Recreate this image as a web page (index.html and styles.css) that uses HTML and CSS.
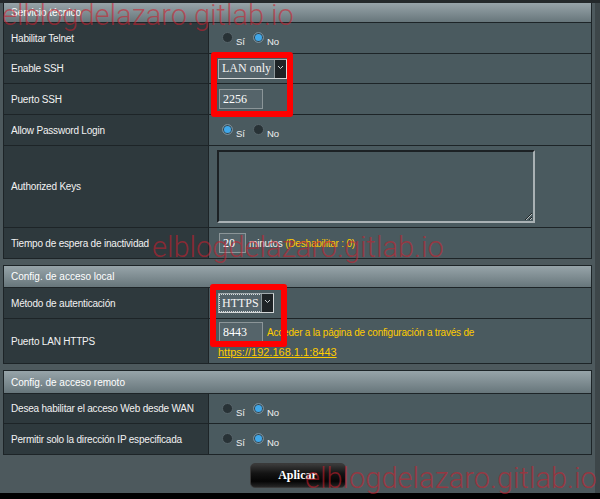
FILE: index.html
```html
<!DOCTYPE html>
<html lang="es">
<head>
<meta charset="utf-8">
<title>Administración - Sistema</title>
<link rel="stylesheet" href="styles.css">
</head>
<body>
<div class="topline"></div>
<div class="page">

  <section class="form-section first">
    <div class="section-head h20">Servicio técnico</div>
    <div class="row h31">
      <div class="label">Habilitar Telnet</div>
      <div class="field">
        <div class="radio-group">
          <label class="radio"><input type="radio" name="telnet"><span>Sí</span></label>
          <label class="radio"><input type="radio" name="telnet" checked><span>No</span></label>
        </div>
      </div>
    </div>
    <div class="row h30">
      <div class="label">Enable SSH</div>
      <div class="field">
        <div class="select">
          <span class="select-text">LAN only</span>
          <span class="select-arrow"><svg width="7" height="5" viewBox="0 0 7 5"><polyline points="1,1 3.5,3.5 6,1" fill="none" stroke="#c9cfd1" stroke-width="1"/></svg></span>
        </div>
      </div>
    </div>
    <div class="row h31">
      <div class="label">Puerto SSH</div>
      <div class="field">
        <input class="text-input w44" type="text" value="2256">
      </div>
    </div>
    <div class="row h31">
      <div class="label">Allow Password Login</div>
      <div class="field">
        <div class="radio-group">
          <label class="radio"><input type="radio" name="pwlogin" checked><span>Sí</span></label>
          <label class="radio"><input type="radio" name="pwlogin"><span>No</span></label>
        </div>
      </div>
    </div>
    <div class="row h82">
      <div class="label">Authorized Keys</div>
      <div class="field">
        <textarea class="keys"></textarea>
      </div>
    </div>
    <div class="row h30 last">
      <div class="label">Tiempo de espera de inactividad</div>
      <div class="field">
        <input class="text-input w27" type="text" value="20">
        <span class="unit">minutos <span class="hint">(Deshabilitar : 0)</span></span>
      </div>
    </div>
  </section>

  <section class="form-section">
    <div class="section-head h22">Config. de acceso local</div>
    <div class="row h31">
      <div class="label">Método de autenticación</div>
      <div class="field">
        <div class="select">
          <span class="select-text focused">HTTPS</span>
          <span class="select-arrow"><svg width="7" height="5" viewBox="0 0 7 5"><polyline points="1,1 3.5,3.5 6,1" fill="none" stroke="#c9cfd1" stroke-width="1"/></svg></span>
        </div>
      </div>
    </div>
    <div class="row h44 last">
      <div class="label">Puerto LAN HTTPS</div>
      <div class="field stack">
        <div class="line">
          <input class="text-input w44" type="text" value="8443">
          <span class="hint note">Acceder a la página de configuración a través de</span>
        </div>
        <a class="lan-link" href="#">https://192.168.1.1:8443</a>
      </div>
    </div>
  </section>

  <section class="form-section">
    <div class="section-head h23">Config. de acceso remoto</div>
    <div class="row h30">
      <div class="label">Desea habilitar el acceso Web desde WAN</div>
      <div class="field">
        <div class="radio-group">
          <label class="radio"><input type="radio" name="wan"><span>Sí</span></label>
          <label class="radio"><input type="radio" name="wan" checked><span>No</span></label>
        </div>
      </div>
    </div>
    <div class="row h30 last">
      <div class="label">Permitir solo la dirección IP especificada</div>
      <div class="field">
        <div class="radio-group">
          <label class="radio"><input type="radio" name="iponly"><span>Sí</span></label>
          <label class="radio"><input type="radio" name="iponly" checked><span>No</span></label>
        </div>
      </div>
    </div>
  </section>

  <div class="actions">
    <button class="btn-apply" type="button">Aplicar</button>
  </div>
</div>
<div class="footer"></div>

<!-- highlight frames drawn over the form -->
<div class="frame frame-ssh"></div>
<div class="frame frame-local"></div>

<!-- site stamp -->
<span class="stamp stamp-a">elblogdelazaro.gitlab.io</span>
<span class="stamp stamp-b">elblogdelazaro.gitlab.io</span>
<span class="stamp stamp-c">elblogdelazaro.gitlab.io</span>
</body>
</html>
```

FILE: styles.css
```css
* {
  box-sizing: border-box;
}

html,
body {
  margin: 0;
  padding: 0;
}

body {
  position: relative;
  height: 499px;
  overflow: hidden;
  background: #3d4649;
  font-family: "Liberation Sans", Arial, sans-serif;
  color: #ffffff;
}

.topline {
  height: 3px;
  background: #24292b;
}

.page {
  width: 595px;
  padding-left: 3px;
  background: #4d595d;
}

/* ---------- form sections ---------- */

.form-section {
  width: 589px;
  border: 1px solid #1d2427;
}

.form-section.first {
  border-top: 0;
}

.form-section + .form-section {
  margin-top: 6px;
}

.section-head {
  display: flex;
  align-items: center;
  padding-left: 7px;
  font-size: 10px;
  color: #ffffff;
  background: linear-gradient(#97a4a9, #7d8b90 55%, #67767b);
  border-bottom: 1px solid #1d2427;
}

.h20 { height: 20px; }
.h22 { height: 22px; }
.h23 { height: 23px; }
.h30 { height: 30px; }
.h31 { height: 31px; }
.h44 { height: 44px; }
.h82 { height: 82px; }

.row {
  display: grid;
  grid-template-columns: 205px 1fr;
  border-bottom: 1px solid #1d2427;
}

.row.last {
  border-bottom: 0;
}

.label {
  display: flex;
  align-items: center;
  padding-left: 7px;
  background: #2e393d;
  border-right: 1px solid #1d2427;
  font-size: 10px;
  letter-spacing: -0.2px;
  color: #f2f2f2;
}

.field {
  display: flex;
  align-items: center;
  padding-left: 9px;
  background: #4a5a5f;
}

.field.stack {
  display: block;
  padding-top: 3px;
}

/* ---------- radios ---------- */

.radio-group {
  display: flex;
  padding-left: 4px;
}

.radio {
  display: inline-flex;
  align-items: flex-end;
  margin-right: 8px;
}

.radio input {
  appearance: none;
  -webkit-appearance: none;
  width: 11px;
  height: 11px;
  margin: -1px 3px 0 0;
  border-radius: 50%;
  background: #283236;
  border: 1px solid #56646a;
}

.radio input:checked {
  background: #40a8ea;
  border-color: #7c888c;
  box-shadow: inset 0 0 0 1px #35434a;
}

.radio span {
  font-size: 9.5px;
  line-height: 10px;
  margin-bottom: -4px;
  color: #f0f0f0;
}

/* ---------- select ---------- */

.select {
  display: inline-flex;
  height: 20px;
  border: 1px solid #a3acaf;
  border-bottom-color: #d3d7d8;
  border-right-color: #d3d7d8;
  background: #54636a;
}

.select-text {
  display: flex;
  align-items: center;
  padding: 0 3px 0 3px;
  font-family: "Liberation Serif", "Times New Roman", serif;
  font-size: 12px;
  color: #f4f4f4;
}

.select-text.focused {
  margin: 1px 0 1px 1px;
  padding: 0 2px;
  outline: 1px dotted #d8dcdd;
}

.select-arrow {
  width: 12px;
  display: flex;
  justify-content: center;
  padding-top: 5px;
  background: #1e2326;
  border-left: 1px solid #8d979a;
}

.select-arrow svg {
  display: block;
}

/* ---------- text inputs ---------- */

.text-input {
  height: 20px;
  margin: 0 0 0 1px;
  padding: 0 0 0 3px;
  border: 1px solid #8b9598;
  background: #55646a;
  color: #ffffff;
  font-family: "Liberation Serif", "Times New Roman", serif;
  font-size: 12px;
  outline: none;
}

.w44 { width: 44px; }
.w27 { width: 27px; }

.keys {
  width: 318px;
  height: 73px;
  margin: 0 0 0 -1px;
  padding: 2px;
  background: #4a5a5f;
  border: 2px solid;
  border-color: #1c2124 #a9b1b4 #a9b1b4 #1c2124;
  color: #ffffff;
  outline: none;
}

.unit {
  margin-left: 3px;
  font-size: 10px;
  letter-spacing: -0.2px;
  color: #f2f2f2;
}

.hint {
  color: #ffcc00;
}

.line {
  display: flex;
  align-items: center;
  height: 20px;
}

.note {
  margin-left: 4px;
  font-size: 10px;
  letter-spacing: -0.2px;
}

.lan-link {
  display: block;
  width: max-content;
  margin-top: 4px;
  font-size: 11px;
  line-height: 12px;
  color: #ffcc00;
  text-decoration: underline;
}

/* ---------- apply button ---------- */

.actions {
  width: 589px;
  display: flex;
  justify-content: center;
  padding: 8px 0 5px;
}

.btn-apply {
  width: 96px;
  height: 25px;
  padding: 0;
  border: 1px solid #3a3a3a;
  border-radius: 5px;
  background: linear-gradient(#3b3b3b, #141414 40%, #050505 75%, #262626);
  color: #ffffff;
  font-family: "Liberation Serif", "Times New Roman", serif;
  font-size: 12px;
  font-weight: bold;
}

.footer {
  height: 12px;
  background: #000000;
}

/* ---------- overlays ---------- */

.frame {
  position: absolute;
  border: 6px solid #ff0000;
  border-radius: 3px;
}

.frame-ssh {
  left: 211px;
  top: 52px;
  width: 82px;
  height: 65px;
}

.frame-local {
  left: 210px;
  top: 284px;
  width: 77px;
  height: 63px;
}

.stamp {
  position: absolute;
  font-family: Roboto, "Liberation Sans", Arial, sans-serif;
  font-weight: 300;
  font-size: 29px;
  line-height: 29px;
  white-space: nowrap;
  color: rgba(205, 30, 45, 0.58);
  pointer-events: none;
}

.stamp-a { left: 2px; top: 1px; }
.stamp-b { left: 152px; top: 233px; }
.stamp-c { left: 305px; top: 464px; }
```
